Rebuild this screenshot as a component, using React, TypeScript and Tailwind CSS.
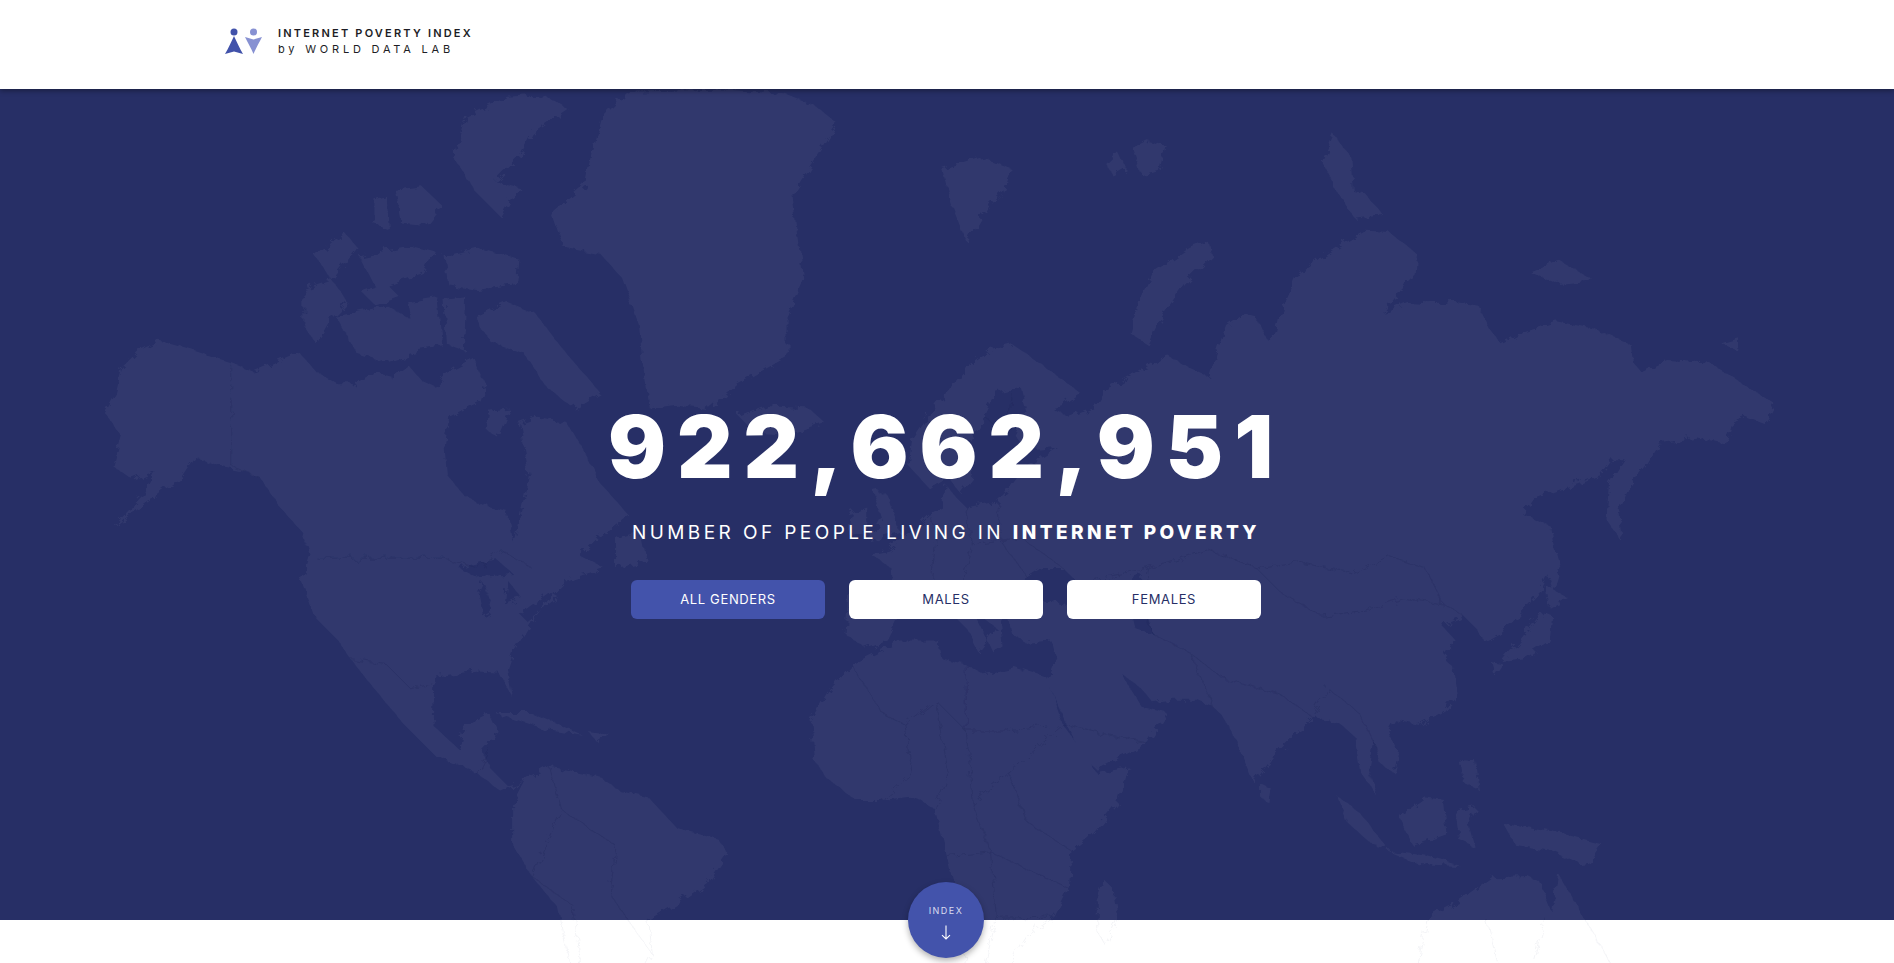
import React from 'react';

// Land outlines traced by eye, in the coordinates of a 1568x797 view of the page
const LAND = [
  // North America, with the Great Lakes cut out
  'M86 341 95 325 100 305 115 290 132 282 160 290 191 300 211 308 230 300 248 292 262 308 280 318 293 318 310 308 325 312 338 302 350 316 361 321 375 305 392 296 402 318 398 332 385 338 372 345 368 370 370 393 384 410 400 418 420 423 425 449 432 420 438 393 430 350 445 345 470 350 490 385 497 400 520 426 495 445 480 460 500 470 470 480 455 495 440 515 425 540 420 555 424 577 413 556 395 555 360 560 358 600 380 620 385 600 405 590 412 605 398 620 405 635 420 650 434 646 415 655 395 640 360 625 335 600 310 570 290 545 280 530 260 510 250 480 257 459 250 440 232 420 215 395 195 388 180 385 161 378 150 395 130 410 105 428 93 437 118 410 128 390 110 397 93 385 100 360Z M380 470 410 462 425 475 395 478Z M400 482 408 505 400 510 396 490Z M420 480 432 495 418 500Z M430 508 455 490 462 494 436 514Z',
  // Greenland
  'M457 177 484 154 490 125 497 99 520 76 600 74 650 78 675 88 693 102 672 135 656 161 660 195 665 230 652 260 652 295 611 318 588 338 560 335 538 338 532 300 529 269 515 230 497 210 466 204Z',
  // Arctic Canada
  'M393 262 420 250 443 259 466 289 497 325 475 338 452 320 434 292 405 282Z',
  'M385 97 420 80 450 78 470 90 440 110 430 130 410 150 430 155 415 180 395 160 375 130Z',
  'M368 212 395 205 430 215 428 235 395 240 372 236Z',
  'M327 158 350 155 366 170 352 187 332 185Z',
  'M310 165 320 162 322 190 310 186Z',
  'M252 240 275 232 288 250 273 265 262 285 252 270Z',
  'M278 262 320 253 347 268 345 292 320 300 295 292Z',
  'M261 212 285 192 296 205 275 232Z',
  'M298 212 340 203 360 208 350 226 312 240Z',
  'M338 250 362 246 366 285 345 288Z',
  'M368 248 386 246 384 290 370 285Z',
  'M404 340 422 338 412 362 402 355Z',
  'M510 445 530 440 535 465 510 470Z',
  'M300 242 320 235 330 245 310 252Z',
  // Caribbean
  'M410 590 440 590 482 608 450 603Z',
  'M488 606 505 608 495 615Z',
  // South America
  'M455 635 434 646 424 665 424 698 440 725 461 750 470 790 480 830 520 830 540 790 537 761 565 745 585 731 602 706 595 695 560 685 537 660 515 655 496 643 480 640Z',
  // Iceland, Britain, Ireland
  'M612 345 635 336 670 338 683 350 655 360 625 358Z',
  'M722 405 735 410 745 440 720 448 730 430Z',
  'M705 425 718 420 718 440 703 443Z',
  // Eurasia, with the Caspian cut out
  'M838 285 860 300 894 325 880 335 871 338 885 345 905 338 913 325 936 312 955 300 968 295 985 305 1001 312 1008 290 1015 269 1029 259 1040 262 1048 280 1057 276 1062 255 1075 226 1095 212 1115 200 1131 191 1150 192 1173 210 1172 228 1160 240 1145 259 1165 250 1182 251 1205 250 1224 253 1232 270 1243 285 1262 275 1289 266 1320 272 1350 285 1352 300 1359 308 1380 298 1396 299 1415 300 1428 308 1450 322 1470 335 1461 351 1445 345 1433 351 1428 367 1405 362 1373 367 1362 385 1348 405 1340 425 1343 449 1330 430 1332 400 1345 380 1335 380 1326 393 1300 402 1270 413 1261 426 1284 436 1289 462 1275 490 1252 515 1240 525 1229 531 1222 520 1212 510 1194 518 1205 530 1195 545 1203 552 1206 575 1196 588 1175 600 1155 596 1150 605 1158 625 1155 640 1143 632 1137 612 1133 635 1141 660 1127 640 1122 610 1108 598 1086 593 1070 610 1055 625 1038 648 1025 615 1010 590 1004 585 992 580 969 580 955 582 945 570 928 557 945 585 966 590 950 615 908 637 895 625 866 563 874 545 870 530 850 532 838 525 834 510 845 503 862 497 885 500 900 495 905 480 890 480 880 470 862 470 850 478 845 495 838 500 828 515 830 535 822 540 815 525 805 505 795 485 800 500 825 520 822 525 810 540 800 520 780 500 770 490 755 495 745 510 735 530 717 537 700 525 702 495 720 488 740 490 738 470 720 458 735 455 755 440 770 425 780 420 782 400 790 410 800 420 825 415 835 405 850 385 875 370 850 372 840 360 850 340 845 320 825 325 815 345 800 370 805 395 795 408 785 395 770 405 752 385 755 365 775 335 800 305 820 290Z M936 478 945 475 948 500 955 525 940 520 935 500Z',
  // Africa
  'M725 540 745 530 777 530 780 545 800 550 815 558 840 552 866 560 880 600 901 629 908 640 935 635 925 665 905 690 887 704 885 735 873 759 850 775 835 800 815 830 800 800 798 770 784 709 774 670 757 659 730 662 709 662 685 645 674 629 671 596 688 568 705 550Z',
  'M914 728 921 735 925 760 915 782 908 770 908 745Z',
  // Arctic Eurasia
  'M780 140 810 130 838 140 830 160 815 175 800 200 788 170Z',
  'M915 135 925 125 932 140 922 146Z',
  'M938 122 950 116 965 120 960 140 945 145Z',
  'M936 276 942 250 955 225 985 205 1000 200 1003 212 980 235 960 265 950 285Z',
  'M1095 135 1105 112 1118 130 1120 158 1130 160 1145 178 1122 181 1108 160Z',
  'M1266 225 1290 215 1320 232 1290 235Z',
  'M1425 284 1440 280 1438 290Z',
  // Japan and the islands off Asia
  'M1243 547 1258 530 1278 505 1285 510 1283 530 1260 545Z',
  'M1280 485 1298 495 1283 503Z',
  'M1235 548 1245 550 1238 560Z',
  'M1283 440 1292 470 1286 490 1280 470Z',
  'M1044 648 1052 652 1050 664 1044 660Z',
  'M1107 659 1125 672 1148 701 1135 698 1115 680Z',
  'M1148 704 1180 708 1210 717 1175 715Z',
  'M1158 676 1180 660 1196 662 1199 690 1170 700Z',
  'M1205 672 1222 668 1215 682 1220 700 1208 695Z',
  'M1209 629 1222 630 1225 654 1212 648Z',
  'M1244 681 1285 688 1326 698 1313 717 1285 705 1255 700Z',
  // Australia
  'M1182 759 1210 745 1237 726 1265 725 1275 730 1285 755 1290 723 1312 761 1335 800 1320 830 1180 830 1175 790Z',
];

// Country borders that show up as thin lines
const BORDERS = [
  'M191 300 191 385 215 395',
  'M262 462 368 462 395 470 415 455 440 470',
  'M290 545 320 550 340 570 358 566',
  'M395 640 405 620',
  // Europe
  'M770 425 775 445 770 490',
  'M800 420 805 450 795 485',
  'M825 415 830 450 845 470 850 478',
  'M838 325 835 360 815 345',
  'M720 488 750 485 770 490',
  'M805 450 845 445 880 470',
  // Russia, Mongolia, China
  'M905 480 950 470 1000 455 1040 470 1075 465 1120 475 1150 460 1180 470 1195 500 1212 510',
  'M1040 470 1060 490 1095 510 1130 505 1160 495 1195 500',
  'M950 470 945 500 955 525 985 540 1004 585',
  'M985 540 1010 560 1060 575 1086 593',
  // Africa
  'M705 550 730 590 750 600 775 580 800 605 800 550',
  'M800 605 835 605 866 600',
  'M750 600 755 640 730 662',
  'M775 580 785 640 774 670',
  'M800 605 805 665 835 640 880 600',
  'M835 640 850 680 887 704',
  'M805 665 820 705 885 735',
  'M784 709 820 705 825 760 873 759',
  'M825 760 815 800',
  // Arabia, India
  'M880 600 950 615',
  'M1086 593 1100 570 1125 590 1140 620',
  // South America
  'M455 635 465 670 495 690 510 700',
  'M465 670 440 725 475 750 480 800',
  'M510 700 505 740 540 790',
  // Bottom of the page, only visible on white
  'M1230 760 1240 797',
  'M1280 760 1270 797',
];

const WorldMap = () => (
  <svg
    viewBox="0 0 1568 797"
    preserveAspectRatio="none"
    className="absolute inset-0 z-10 h-full w-full"
  >
    <defs>
      <filter id="rough" x="0" y="0" width="1" height="1" filterUnits="objectBoundingBox">
        <feTurbulence type="fractalNoise" baseFrequency="0.13" numOctaves="4" seed="4" />
        <feDisplacementMap in="SourceGraphic" scale="9" />
      </filter>
      <clipPath id="hero-clip">
        <rect x="0" y="0" width="1568" height="761.5" />
      </clipPath>
      <clipPath id="below-clip">
        <rect x="0" y="761.5" width="1568" height="36" />
      </clipPath>
    </defs>
    <g clipPath="url(#hero-clip)">
      <g fill="#fff" opacity="0.045" filter="url(#rough)">
        {LAND.map((d, i) => (
          <path key={i} d={d} fillRule="evenodd" />
        ))}
      </g>
      <g fill="none" stroke="#1c2354" strokeWidth="0.6" opacity="0.35" filter="url(#rough)">
        {BORDERS.map((d, i) => (
          <path key={i} d={d} />
        ))}
      </g>
    </g>
    <g clipPath="url(#below-clip)">
      <g fill="none" stroke="#272f66" strokeWidth="0.7" opacity="0.06" filter="url(#rough)">
        {LAND.map((d, i) => (
          <path key={i} d={d} />
        ))}
        {BORDERS.map((d, i) => (
          <path key={i} d={d} />
        ))}
      </g>
    </g>
  </svg>
);

const Logo = () => (
  <svg width="38" height="26" viewBox="0 0 38 26" className="shrink-0">
    <circle cx="9" cy="4" r="3.5" fill="#4152aa" />
    <path d="M9 8 C11.5 13.5 14.5 20 18 26 L9 23.5 L0 26 C3.5 20 6.5 13.5 9 8Z" fill="#4152aa" />
    <circle cx="28.5" cy="4" r="3.5" fill="#8791d2" />
    <path d="M20 9 L28.5 11.5 L37 9 C34.5 14 31 20 28.5 26 C26 20 22.5 14 20 9Z" fill="#8791d2" />
  </svg>
);

const App = () => {
  const buttons = ['ALL GENDERS', 'MALES', 'FEMALES'];

  return (
    <div className="relative h-screen overflow-hidden bg-white font-['Inter',sans-serif]">
      <header className="relative z-20 flex h-[89px] items-center bg-white pb-[7px] pl-[225px] shadow-[0_2px_5px_rgba(0,0,0,0.35)]">
        <Logo />
        <div className="ml-[15px] text-[11px] leading-[16px] text-[#1d1d25]">
          <div className="font-semibold tracking-[0.2em]">INTERNET POVERTY INDEX</div>
          <div className="tracking-[0.345em]">by WORLD DATA LAB</div>
        </div>
      </header>

      <section className="flex h-[831px] flex-col items-center bg-[#272f66] pr-[2px] pt-[315px] text-white">
        <div className="relative z-20 text-[86px] font-black leading-none tracking-[0.128em]">
          922,662,951
        </div>
        <div className="relative z-20 mt-[29px] text-[19px] leading-[28px] tracking-[0.18em]">
          NUMBER OF PEOPLE LIVING IN <span className="font-extrabold">INTERNET POVERTY</span>
        </div>
        <div className="relative z-20 mt-[33px] flex gap-[24px]">
          {buttons.map((label, i) => (
            <button
              key={label}
              className={
                i === 0
                  ? 'h-[39px] w-[194px] rounded-md bg-[#4353ab] text-[13px] tracking-[0.05em] text-white'
                  : 'h-[39px] w-[194px] rounded-md bg-white text-[13px] tracking-[0.05em] text-[#272f66]'
              }
            >
              {label}
            </button>
          ))}
        </div>
      </section>

      <WorldMap />

      <button className="absolute left-[908px] top-[882px] z-20 flex h-[76px] w-[76px] flex-col items-center rounded-full bg-[#4353ab] pt-[23px] text-white shadow-[0_3px_6px_rgba(0,0,0,0.3)]">
        <span className="text-[9px] leading-[12px] tracking-[0.16em] text-[#d9dcf0]">INDEX</span>
        <svg width="12" height="15" viewBox="0 0 12 15" className="mt-[8px]" fill="none" stroke="#fff" strokeWidth="1.1">
          <path d="M6 0.5V14M2 10.2L6 14L10 10.2" />
        </svg>
      </button>
    </div>
  );
};

export default App;
